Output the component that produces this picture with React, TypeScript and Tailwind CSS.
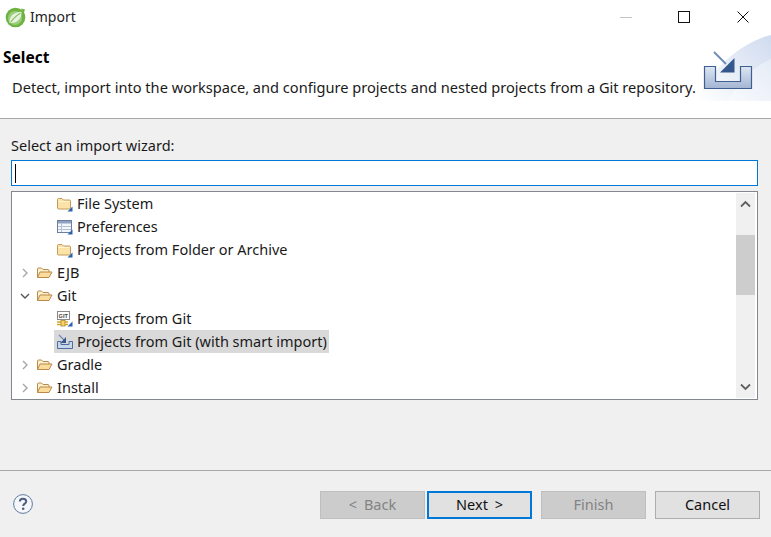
import { ReactNode } from "react";

const FONT = "font-['Noto_Sans','Noto_Sans_CJK_KR',sans-serif]";

function SpringLogo() {
  return (
    <svg width="21" height="21" viewBox="0 0 21 21" className="shrink-0">
      <circle cx="10.5" cy="10.5" r="9.8" fill="#6db33f" />
      <circle cx="10" cy="11" r="7" fill="#9ccb7e" />
      <path d="M4.5 16C3.8 10 8.5 4.8 16.5 4.8C17 11.5 12 17 4.5 16Z" fill="#e6f2dd" />
      <path d="M5.5 15.5C8 11.5 11 9 15.5 6" stroke="#8cc36a" strokeWidth="1.2" fill="none" />
      <path d="M16 1.5L20 2.5L18.5 7Z" fill="#6db33f" />
    </svg>
  );
}

function WizardBanner() {
  return (
    <div className="mt-[1px] h-[66px] w-[73px] shrink-0 overflow-hidden">
      <svg width="73" height="66" viewBox="0 0 73 66">
        <defs>
          <linearGradient id="wash" x1="0" y1="1" x2="1" y2="0">
            <stop offset="0" stopColor="#ffffff" />
            <stop offset="1" stopColor="#cfdbef" />
          </linearGradient>
          <linearGradient id="tray" x1="0" y1="0" x2="0" y2="1">
            <stop offset="0" stopColor="#dde6f3" />
            <stop offset="1" stopColor="#a3b5d2" />
          </linearGradient>
        </defs>
        <path d="M0 66C8 40 40 8 73 0V66Z" fill="url(#wash)" />
        <path d="M30 66C40 45 55 32 73 24V66Z" fill="#ffffff" opacity="0.35" />
        <path d="M6.5 31.5H17.5V46.5H42.5V31.5H53.5V53.5H6.5Z" fill="url(#tray)" stroke="#3f5f90" strokeWidth="1.2" />
        <path d="M16 17L28 29" stroke="#6f8db8" strokeWidth="2" />
        <path d="M36.5 23V37.5H22Z" fill="#34588e" />
      </svg>
    </div>
  );
}

function FolderClosed({ badge }: { badge?: boolean }) {
  return (
    <svg width="16" height="16" viewBox="1 0 16 16" className="shrink-0">
      <path d="M1.5 3.5C1.5 2.8 2 2.5 2.5 2.5H6L7.5 4H13.5C14.2 4 14.5 4.5 14.5 5V12C14.5 12.6 14 13 13.5 13H2.5C2 13 1.5 12.6 1.5 12Z" fill="#fbe3a8" stroke="#c39a5a" />
      <path d="M2.5 5.5H13.5" stroke="#fff4d4" />
      {badge && <path d="M16.5 10.5V15.5H11.5Z" fill="#2a62ad" />}
    </svg>
  );
}

function FolderOpen() {
  return (
    <svg width="16" height="16" viewBox="1 0 16 16" className="shrink-0">
      <path d="M1.5 12.5V4C1.5 3.3 2 3 2.5 3H5.5L7 4.5H12C12.6 4.5 13 5 13 5.5V7" fill="#fdf0cd" stroke="#b98a4c" />
      <path d="M1.5 12.5L4 7H16L13 12.5Z" fill="#fbdc9c" stroke="#b98a4c" strokeLinejoin="round" />
    </svg>
  );
}

function TableIcon() {
  return (
    <svg width="16" height="16" viewBox="0 0 16 16" className="shrink-0">
      <rect x="0.5" y="1.5" width="14" height="12" fill="#f3f6fb" stroke="#6d7f9c" />
      <rect x="1" y="2" width="13" height="2.5" fill="#8fa2bf" />
      <path d="M4.5 4.5V13M1 7.5H14M1 10.5H14" stroke="#b4c0d3" />
      <path d="M15.5 10.5V15.5H10.5Z" fill="#2a62ad" />
    </svg>
  );
}

function GitIcon() {
  return (
    <svg width="16" height="16" viewBox="0 0 16 16" className="shrink-0">
      <rect x="0.5" y="0.5" width="12" height="8" fill="#fff" stroke="#8a8a8a" />
      <text x="1.6" y="6.6" fontSize="5.6" fontWeight="700" fontFamily="'Liberation Sans', sans-serif" fill="#444">GIT</text>
      <path d="M0 11H11M0 13.5H11" stroke="#d8a72a" strokeWidth="1.4" />
      <rect x="4" y="9.5" width="4" height="5.5" fill="#f3d36b" stroke="#b08a2a" strokeWidth="0.8" />
      <path d="M15.5 10.5V15.5H10.5Z" fill="#2a62ad" />
    </svg>
  );
}

function ImportIcon() {
  return (
    <svg width="16" height="16" viewBox="0 0 16 16" className="shrink-0">
      <path d="M0.5 7.5H4V10.5H12V7.5H15.5V14.5H0.5Z" fill="#c9d7ea" stroke="#4c6f9f" />
      <path d="M2 1L7 6" stroke="#6f8db8" strokeWidth="1.3" />
      <path d="M9 3V9H3.5Z" fill="#34588e" />
    </svg>
  );
}

function Row({ indent, arrow, icon, label, selected }: { indent: "top" | "child"; arrow?: "right" | "down"; icon: ReactNode; label: string; selected?: boolean }) {
  return (
    <div className={`flex h-[23px] items-center ${indent === "top" ? "pl-[3px]" : "pl-[42px]"}`}>
      {indent === "top" && (
        <span className="flex w-[19px] justify-center">
          {arrow === "right" && (
            <svg width="8" height="10" viewBox="0 0 8 10"><path d="M2 1L6 5L2 9" fill="none" stroke="#a6a6a6" strokeWidth="1.4" /></svg>
          )}
          {arrow === "down" && (
            <svg width="10" height="8" viewBox="0 0 10 8"><path d="M1 2L5 6L9 2" fill="none" stroke="#555" strokeWidth="1.4" /></svg>
          )}
        </span>
      )}
      <span className={`flex h-[23px] items-center gap-[4px] pl-[3px] pr-[2px] ${selected ? "bg-[#d9d9d9]" : ""}`}>
        {icon}
        <span className="mt-[1px] whitespace-nowrap text-[14.5px] text-[#1a1a1a]">{label}</span>
      </span>
    </div>
  );
}

function DialogButton({ label, disabled, focused }: { label: string; disabled?: boolean; focused?: boolean }) {
  const look = disabled
    ? "border border-[#bfbfbf] bg-[#cccccc] text-[#838383]"
    : focused
      ? "border-2 border-[#0078d7] bg-[#e1e1e1] text-[#111]"
      : "border border-[#adadad] bg-[#e1e1e1] text-[#111]";
  return (
    <div className={`flex h-[28px] w-[105px] items-center justify-center text-[14.5px] [word-spacing:3px] ${look}`}>{label}</div>
  );
}

export default function App() {
  return (
    <div className={`flex h-[537px] w-[771px] flex-col overflow-hidden bg-[#f0f0f0] ${FONT}`}>
      {/* title bar */}
      <div className="flex h-[34px] items-center bg-white pl-[5px]">
        <SpringLogo />
        <span className="mb-[1px] ml-[4px] text-[14px] text-[#222]">Import</span>
        <div className="ml-auto flex items-center">
          <span className="mr-[46px] h-px w-[12px] bg-[#c4c4c4]" />
          <span className="mr-[47px] h-[12px] w-[12px] border border-[#111]" />
          <svg width="12" height="12" viewBox="0 0 12 12" className="mr-[22px]"><path d="M0.5 0.5L11.5 11.5M11.5 0.5L0.5 11.5" stroke="#111" strokeWidth="1" /></svg>
        </div>
      </div>

      {/* wizard header */}
      <div className="flex h-[85px] items-start justify-between border-b border-[#a8a8a8] bg-white pl-[3px]">
        <div>
          <div className="mt-[11px] text-[15.5px] font-bold leading-[24px] text-black">Select</div>
          <div className="ml-[9px] mt-[7px] whitespace-nowrap text-[14.6px] leading-[22px] text-[#1a1a1a]">
            Detect, import into the workspace, and configure projects and nested projects from a Git repository.
          </div>
        </div>
        <WizardBanner />
      </div>

      {/* body */}
      <div className="flex flex-1 flex-col px-[11px]">
        <div className="mt-[16px] text-[14.5px] leading-[20px] text-[#1a1a1a]">Select an import wizard:</div>
        <div className="mt-[5px] flex h-[26px] w-[747px] items-center border border-[#0078d7] bg-white pl-[3px]">
          <span className="h-[19px] w-px bg-black" />
        </div>
        <div className="mt-[5px] flex h-[209px] w-[747px] border border-[#828790] bg-white">
          <div className="flex-1 overflow-hidden">
            <Row indent="child" icon={<FolderClosed badge />} label="File System" />
            <Row indent="child" icon={<TableIcon />} label="Preferences" />
            <Row indent="child" icon={<FolderClosed badge />} label="Projects from Folder or Archive" />
            <Row indent="top" arrow="right" icon={<FolderOpen />} label="EJB" />
            <Row indent="top" arrow="down" icon={<FolderOpen />} label="Git" />
            <Row indent="child" icon={<GitIcon />} label="Projects from Git" />
            <Row indent="child" icon={<ImportIcon />} label="Projects from Git (with smart import)" selected />
            <Row indent="top" arrow="right" icon={<FolderOpen />} label="Gradle" />
            <Row indent="top" arrow="right" icon={<FolderOpen />} label="Install" />
          </div>
          {/* scrollbar */}
          <div className="my-px mr-[2px] flex w-[19px] flex-col bg-[#f0f0f0]">
            <div className="flex h-[42px] items-start justify-center pt-[7px]">
              <svg width="11" height="8" viewBox="0 0 11 8"><path d="M1 6.5L5.5 2L10 6.5" fill="none" stroke="#606060" strokeWidth="1.8" /></svg>
            </div>
            <div className="h-[60px] bg-[#cdcdcd]" />
            <div className="flex flex-1 items-end justify-center pb-[7px]">
              <svg width="11" height="8" viewBox="0 0 11 8"><path d="M1 1.5L5.5 6L10 1.5" fill="none" stroke="#606060" strokeWidth="1.8" /></svg>
            </div>
          </div>
        </div>
      </div>

      {/* footer */}
      <div className="flex h-[67px] items-start border-t border-[#a8a8a8] pl-[13px] pr-[11px]">
        <svg width="20" height="20" viewBox="0 0 20 20" className="mt-[23px]">
          <circle cx="10" cy="10" r="9.4" fill="#f5f7fa" stroke="#5d7aa3" strokeWidth="1" />
          <path d="M6.8 7.6C6.8 5.8 8.2 4.8 10 4.8C11.9 4.8 13.2 5.9 13.2 7.4C13.2 9.6 10.2 9.6 10.2 12" fill="none" stroke="#4a6184" strokeWidth="2" />
          <circle cx="10.2" cy="14.8" r="1.3" fill="#4a6184" />
        </svg>
        <div className="ml-auto mt-[20px] flex items-center">
          <DialogButton label="< Back" disabled />
          <span className="w-[2px]" />
          <DialogButton label="Next >" focused />
          <span className="w-[9px]" />
          <DialogButton label="Finish" disabled />
          <span className="w-[9px]" />
          <DialogButton label="Cancel" />
        </div>
      </div>
    </div>
  );
}
